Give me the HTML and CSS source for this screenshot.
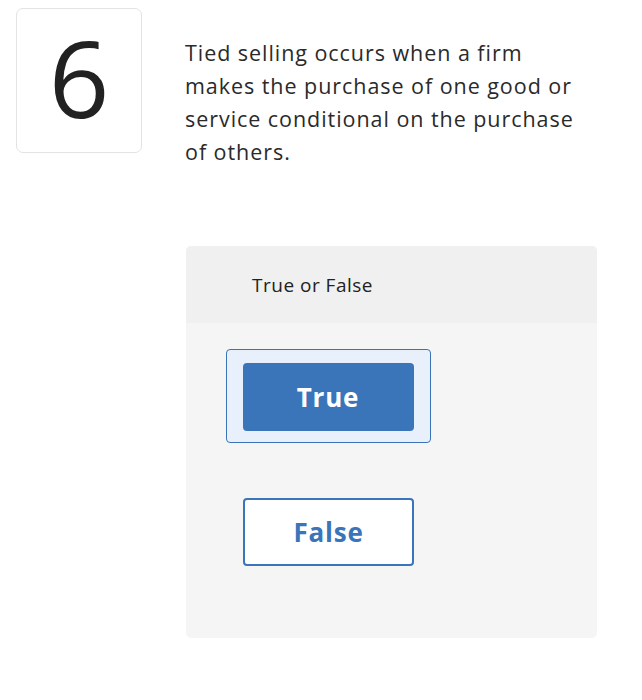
FILE: index.html
```html
<!DOCTYPE html>
<html>
<head>
<meta charset="utf-8">
<link rel="stylesheet" href="styles.css">
</head>
<body>
<div class="question">
  <div class="num-box"><span class="num">6</span></div>
  <p class="prompt">Tied selling occurs when a firm makes the purchase of one good or service conditional on the purchase of others.</p>
</div>
<div class="panel">
  <div class="panel-head">True or False</div>
  <div class="panel-body">
    <div class="choice-selected"><button class="btn btn-true">True</button></div>
    <div class="choice"><button class="btn btn-false">False</button></div>
  </div>
</div>
</body>
</html>
```
FILE: styles.css
```css
html, body { margin: 0; padding: 0; background: #fff; }
body { font-family: "Open Sans", "Lato", sans-serif; color: #222; width: 642px; }
.question { display: flex; align-items: flex-start; padding: 8px 0 0 16px; height: 160px; box-sizing: border-box; }
.num-box {
  width: 124px; height: 143px; border: 1px solid #e3e3e3; border-radius: 7px;
  display: flex; align-items: center; justify-content: center; box-sizing: content-box;
}
.num { font-size: 106px; line-height: 1; color: #222; font-weight: 400; margin-top: -8px; }
.prompt {
  margin: 0 0 0 43px; padding-top: 28px; width: 400px;
  font-size: 21.5px; letter-spacing: 0.95px; line-height: 33px; color: #2a2a2a;
}
.panel {
  margin: 86px 0 0 186px; width: 411px; border-radius: 5px; overflow: hidden;
  background: #f5f5f6;
}
.panel-head {
  height: 77px; background: #f0f0f0; display: flex; align-items: center;
  padding-left: 66px; font-size: 19px; letter-spacing: 0.5px; color: #222; box-sizing: border-box;
}
.panel-body { padding: 26px 0 72px 40px; }
.choice-selected {
  width: 205px; box-sizing: border-box; border: 1.5px solid #3b73b9; border-radius: 4px;
  background: #e8f1fb; padding: 12.5px 15.5px 11px;
}
.choice { margin-top: 55px; padding-left: 17px; }
.btn {
  display: flex; align-items: center; justify-content: center;
  width: 171px; height: 68px; border-radius: 4px; box-sizing: border-box;
  font-family: inherit; font-size: 26px; letter-spacing: 0.8px; font-weight: 700; cursor: pointer;
}
.btn-true { background: #3a75b9; color: #fff; border: none; }
.btn-false { background: #fff; color: #3a75b9; border: 2px solid #3a75b9; }
```
